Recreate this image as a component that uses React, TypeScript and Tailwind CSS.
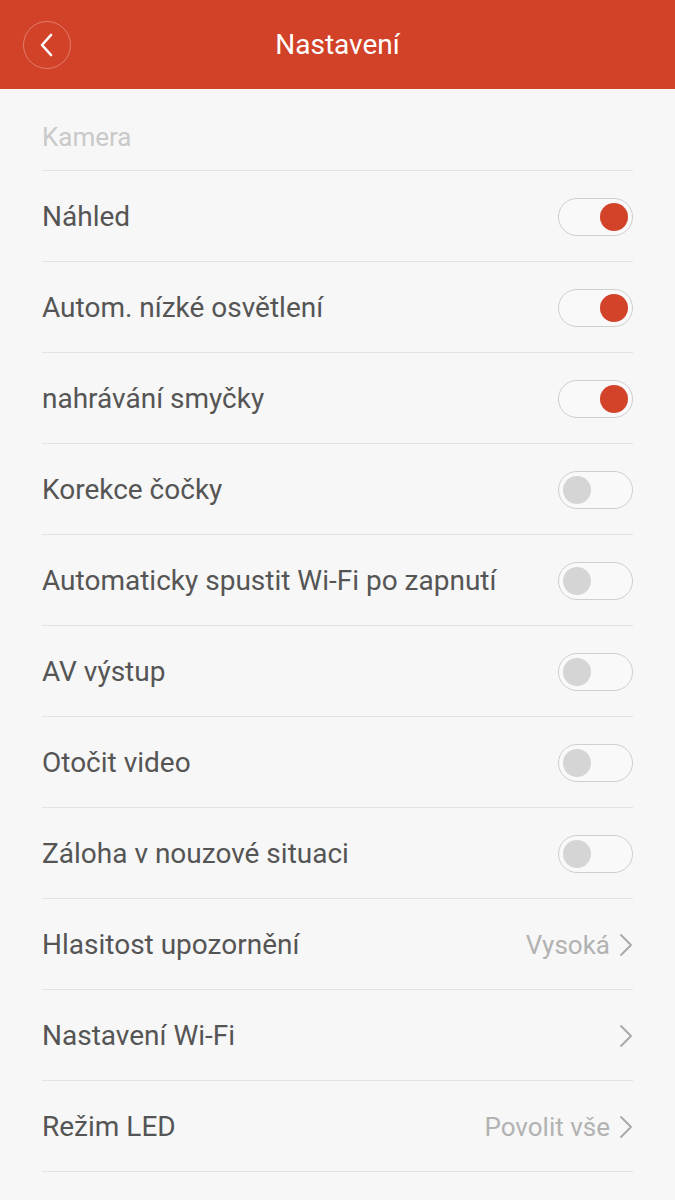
import { useState } from "react"

type Row =
  | { label: string; kind: "toggle"; on: boolean }
  | { label: string; kind: "link"; value?: string }

const rows: Row[] = [
  { label: "Náhled", kind: "toggle", on: true },
  { label: "Autom. nízké osvětlení", kind: "toggle", on: true },
  { label: "nahrávání smyčky", kind: "toggle", on: true },
  { label: "Korekce čočky", kind: "toggle", on: false },
  { label: "Automaticky spustit Wi-Fi po zapnutí", kind: "toggle", on: false },
  { label: "AV výstup", kind: "toggle", on: false },
  { label: "Otočit video", kind: "toggle", on: false },
  { label: "Záloha v nouzové situaci", kind: "toggle", on: false },
  { label: "Hlasitost upozornění", kind: "link", value: "Vysoká" },
  { label: "Nastavení Wi-Fi", kind: "link" },
  { label: "Režim LED", kind: "link", value: "Povolit vše" },
]

function Toggle({ initial }: { initial: boolean }) {
  const [on, setOn] = useState(initial)
  return (
    <button
      onClick={() => setOn(!on)}
      className={`flex h-[38px] w-[75px] items-center rounded-full border-[1.5px] border-[#cfcfcf] bg-[#f9f9f9] px-[4px] ${
        on ? "justify-end" : "justify-start"
      }`}
    >
      <span className={`h-[28px] w-[28px] rounded-full ${on ? "bg-[#d2432a]" : "bg-[#d5d5d5]"}`} />
    </button>
  )
}

function Chevron() {
  return (
    <svg width="14" height="24" viewBox="0 0 14 24" fill="none">
      <path d="M2 2 L12 12 L2 22" stroke="#a8a8a8" strokeWidth="1.8" strokeLinecap="round" strokeLinejoin="round" />
    </svg>
  )
}

export default function App() {
  return (
    <div className="min-h-[1200px] w-[675px] bg-[#f7f7f7] font-['Roboto',sans-serif]">
      <header className="relative flex h-[89px] items-center justify-center bg-[#d14229]">
        <button className="absolute left-[23px] top-[21px] flex h-[48px] w-[48px] items-center justify-center rounded-full border-[1.5px] border-white/30">
          <svg width="16" height="24" viewBox="0 0 16 24" fill="none">
            <path d="M12 2 L3 12 L12 22" stroke="white" strokeWidth="2.6" strokeLinecap="round" strokeLinejoin="round" />
          </svg>
        </button>
        <h1 className="text-[28px] text-white">Nastavení</h1>
      </header>

      <div className="px-[42px]">
        <div className="flex h-[82px] items-center border-b border-[#e2e2e2] pt-[16px] text-[26px] text-[#c9c9c9]">
          Kamera
        </div>
        {rows.map((row) => (
          <div
            key={row.label}
            className="flex h-[91px] items-center justify-between border-b border-[#e2e2e2] pt-[2px] text-[28px] text-[#555555]"
          >
            <span>{row.label}</span>
            {row.kind === "toggle" ? (
              <Toggle initial={row.on} />
            ) : (
              <span className="flex items-center gap-[9px] text-[26px] text-[#b2b2b2]">
                {row.value}
                <Chevron />
              </span>
            )}
          </div>
        ))}
      </div>
    </div>
  )
}
